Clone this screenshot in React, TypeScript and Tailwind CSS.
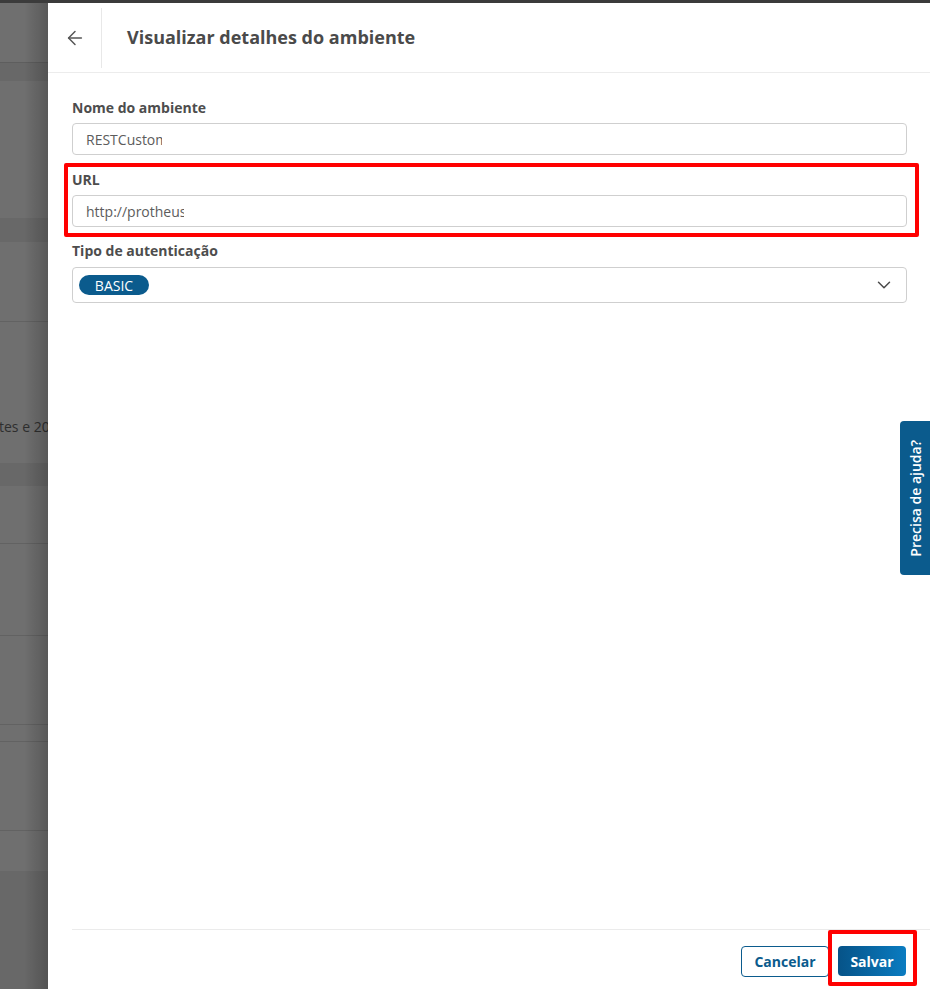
import { ArrowLeft, ChevronDown } from 'lucide-react';

const font = { fontFamily: '"Open Sans", "Noto Sans", Arial, sans-serif' };

const label = 'text-[14px] leading-[20px] font-bold text-[#4d4d4d]';
const input = 'h-[32px] rounded-[4px] border border-[#cfcfcf] bg-white flex items-center pl-[13px] text-[14px] text-[#5c5c5c]';

function Backdrop() {
  return (
    <div className="relative w-[48px] shrink-0 bg-[#6f6f6f] overflow-hidden flex flex-col">
      <div className="h-[59px]" />
      <div className="h-[19px] bg-[#686868] border-t border-[#5e5e5e]" />
      <div className="h-[137px]" />
      <div className="h-[24px] bg-[#686868]" />
      <div className="h-[80px] border-b border-[#626262]" />
      <div className="h-[141px] flex items-end pb-[26px]">
        <span className="whitespace-nowrap text-[14px] text-[#2e2e2e] -ml-[1px]">tes e 2025</span>
      </div>
      <div className="h-[23px] bg-[#686868]" />
      <div className="h-[58px] border-b border-[#626262]" />
      <div className="h-[92px] border-b border-[#626262]" />
      <div className="h-[89px] border-b border-[#626262]" />
      <div className="h-[17px] border-b border-[#626262]" />
      <div className="h-[89px] border-b border-[#626262]" />
      <div className="h-[40px]" />
      <div className="flex-1 bg-[#686868]" />
      {/* drawer shadow */}
      <div className="absolute inset-0 bg-gradient-to-r from-transparent via-transparent to-[#00000033]" />
    </div>
  );
}

export default function App() {
  return (
    <div className="relative w-[930px] h-[989px] flex flex-col overflow-hidden bg-white" style={font}>
      <div className="h-[3px] bg-[#3b3b3b] shrink-0" />
      <div className="flex flex-1 min-h-0">
        <Backdrop />

        <div className="flex-1 flex flex-col bg-white">
          {/* header */}
          <div className="h-[70px] flex items-center border-b border-[#ececec] shrink-0">
            <div className="w-[54px] h-[60px] flex items-center justify-center border-r border-[#e8e8e8]">
              <ArrowLeft size={22} strokeWidth={1.6} className="text-[#555]" />
            </div>
            <h1 className="pl-[25px] text-[18px] font-bold text-[#4a4a4a]">Visualizar detalhes do ambiente</h1>
          </div>

          {/* form */}
          <div className="flex-1 px-[24px] pr-[23px] pt-[25px] flex flex-col">
            <div className={label}>Nome do ambiente</div>
            <div className={`${input} mt-[5px]`}>
              <span className="block w-[76px] overflow-hidden whitespace-nowrap">RESTCustom</span>
            </div>

            <div className={`${label} mt-[15px]`}>URL</div>
            <div className={`${input} mt-[5px]`}>
              <span className="block w-[98px] overflow-hidden whitespace-nowrap">http://protheus</span>
            </div>

            <div className={`${label} mt-[14px]`}>Tipo de autenticação</div>
            <div className="mt-[6px] h-[36px] rounded-[4px] border border-[#cfcfcf] flex items-center pl-[6px] pr-[11px]">
              <span className="h-[20px] w-[70px] rounded-full bg-[#0b5b8d] text-white text-[14px] font-medium flex items-center justify-center">
                BASIC
              </span>
              <ChevronDown size={22} strokeWidth={1.6} className="ml-auto text-[#4a4a4a]" />
            </div>
          </div>

          {/* footer */}
          <div className="ml-[24px] border-t border-[#ebebeb] h-[60px] flex items-center justify-end gap-[9px] pr-[24px] pt-[3px] shrink-0">
            <button className="h-[31px] w-[88px] rounded-[4px] border border-[#0b5b8d] text-[#0b5b8d] text-[14px] font-bold bg-white">
              Cancelar
            </button>
            <button className="h-[30px] w-[68px] rounded-[4px] text-white text-[14px] font-bold bg-gradient-to-r from-[#065388] to-[#0a7cc1]">
              Salvar
            </button>
          </div>
        </div>
      </div>

      {/* help tab */}
      <div className="absolute right-0 top-[421px] w-[30px] h-[154px] rounded-l-[4px] bg-[#0b5b8d] flex items-center justify-center">
        <span className="text-white text-[14px] font-semibold whitespace-nowrap rotate-180 [writing-mode:vertical-rl]">
          Precisa de ajuda?
        </span>
      </div>

      {/* annotations */}
      <div className="absolute left-[64px] top-[163px] w-[855px] h-[74px] border-[4px] border-[#ff0000] rounded-[2px]" />
      <div className="absolute left-[828px] top-[930px] w-[89px] h-[56px] border-[4px] border-[#ff0000] rounded-[2px]" />
    </div>
  );
}
